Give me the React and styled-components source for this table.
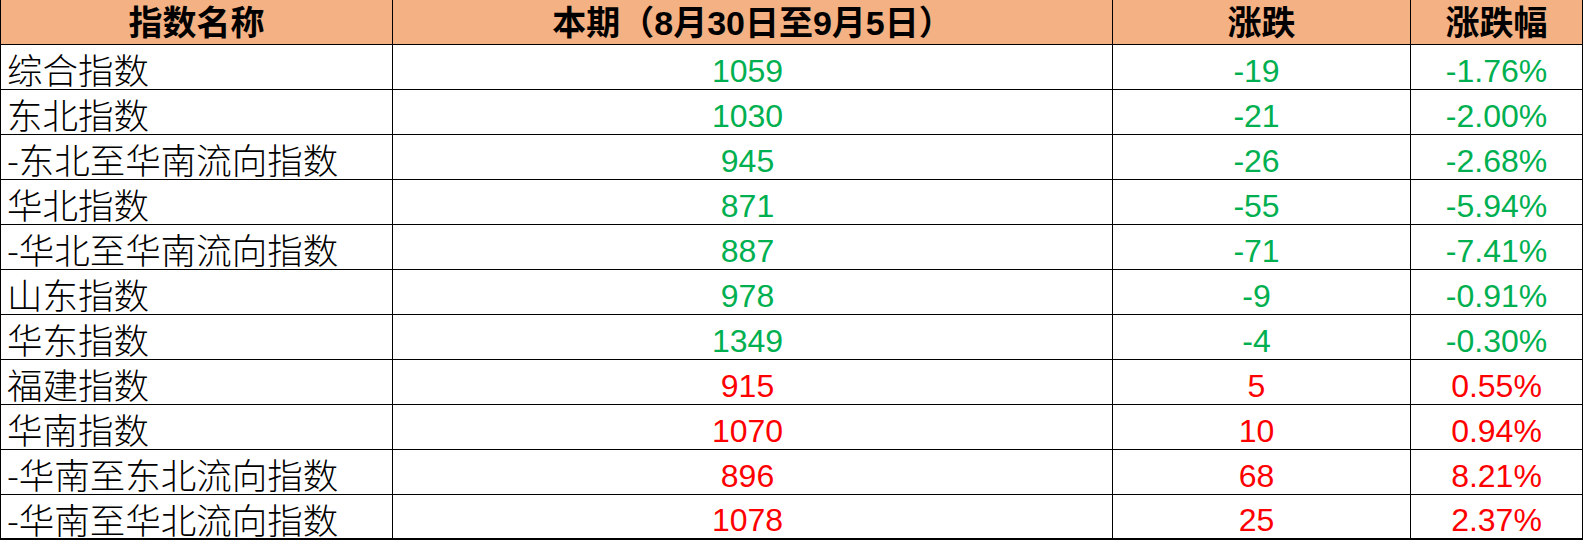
import React from 'react'
import styled, { createGlobalStyle } from 'styled-components'

const Global = createGlobalStyle`
  html, body { margin: 0; padding: 0; background: #fff; }
`

const Table = styled.div`
  display: grid;
  grid-template-columns: 392px 720px 298px 172px;
  grid-auto-rows: 45px;
  width: 1583px;
  border-left: 1px solid #000;
  box-sizing: border-box;
  font-family: 'Noto Sans CJK SC', sans-serif;
`

const HeadCell = styled.div`
  background: #f4b183;
  border-right: 1px solid #000;
  border-bottom: 1px solid #000;
  display: flex;
  align-items: center;
  justify-content: center;
  font-family: 'Liberation Sans', 'Noto Sans CJK SC', sans-serif;
  font-size: 34px;
  font-weight: 700;
  color: #000;
  line-height: 1;
  padding-top: 2px;
  box-sizing: border-box;
  white-space: nowrap;
`

const NameCell = styled.div`
  border-right: 1px solid #000;
  border-bottom: ${p => (p.$last ? 2 : 1)}px solid #000;
  display: flex;
  align-items: center;
  padding: 4px 0 0 6px;
  font-size: 35.5px;
  font-weight: 300;
  color: #000;
  line-height: 1;
  box-sizing: border-box;
  white-space: nowrap;
`

const NumCell = styled.div`
  border-right: 1px solid #000;
  border-bottom: ${p => (p.$last ? 2 : 1)}px solid #000;
  display: flex;
  align-items: center;
  justify-content: center;
  padding: 7px ${p => p.$shift || 0}px 0 0;
  font-family: 'Liberation Sans', Arial, sans-serif;
  font-size: 32px;
  color: ${p => (p.$up ? '#ff0000' : '#00b050')};
  line-height: 1;
  box-sizing: border-box;
`

const rows = [
  ['综合指数', '1059', '-19', '-1.76%'],
  ['东北指数', '1030', '-21', '-2.00%'],
  ['-东北至华南流向指数', '945', '-26', '-2.68%'],
  ['华北指数', '871', '-55', '-5.94%'],
  ['-华北至华南流向指数', '887', '-71', '-7.41%'],
  ['山东指数', '978', '-9', '-0.91%'],
  ['华东指数', '1349', '-4', '-0.30%'],
  ['福建指数', '915', '5', '0.55%'],
  ['华南指数', '1070', '10', '0.94%'],
  ['-华南至东北流向指数', '896', '68', '8.21%'],
  ['-华南至华北流向指数', '1078', '25', '2.37%'],
]

export default function App() {
  return (
    <>
      <Global />
      <Table>
        <HeadCell>指数名称</HeadCell>
        <HeadCell>本期（8月30日至9月5日）</HeadCell>
        <HeadCell>涨跌</HeadCell>
        <HeadCell>涨跌幅</HeadCell>
        {rows.map(([name, val, chg, pct], i) => {
          const up = !chg.startsWith('-')
          const last = i === rows.length - 1
          return (
            <React.Fragment key={name}>
              <NameCell $last={last}>{name}</NameCell>
              <NumCell $up={up} $last={last} $shift={10}>{val}</NumCell>
              <NumCell $up={up} $last={last} $shift={10}>{chg}</NumCell>
              <NumCell $up={up} $last={last} $shift={0}>{pct}</NumCell>
            </React.Fragment>
          )
        })}
      </Table>
    </>
  )
}
